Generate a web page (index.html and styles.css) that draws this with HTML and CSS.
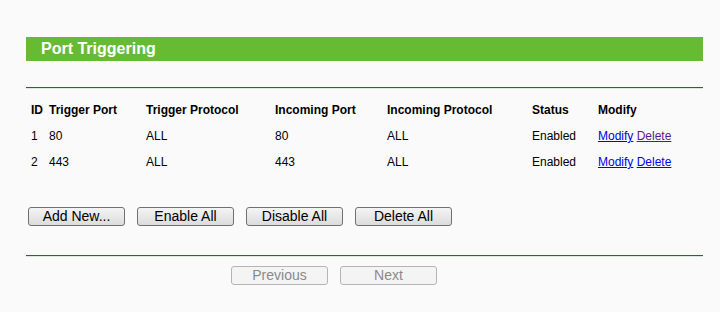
FILE: index.html
```html
<!DOCTYPE html>
<html lang="en">
<head>
  <meta charset="UTF-8">
  <title>Port Triggering</title>
  <link rel="stylesheet" href="styles.css">
</head>
<body>
  <div class="page">
    <div class="title">Port Triggering</div>
    <div class="rule"></div>

    <table class="list">
      <tr class="head">
        <td>ID</td>
        <td>Trigger Port</td>
        <td>Trigger Protocol</td>
        <td>Incoming Port</td>
        <td>Incoming Protocol</td>
        <td>Status</td>
        <td>Modify</td>
      </tr>
      <tr>
        <td>1</td>
        <td>80</td>
        <td>ALL</td>
        <td>80</td>
        <td>ALL</td>
        <td>Enabled</td>
        <td><a href="#">Modify</a> <a href="#" class="visited">Delete</a></td>
      </tr>
      <tr>
        <td>2</td>
        <td>443</td>
        <td>ALL</td>
        <td>443</td>
        <td>ALL</td>
        <td>Enabled</td>
        <td><a href="#">Modify</a> <a href="#">Delete</a></td>
      </tr>
    </table>

    <div class="actions">
      <button class="btn">Add New...</button>
      <button class="btn">Enable All</button>
      <button class="btn">Disable All</button>
      <button class="btn">Delete All</button>
    </div>

    <div class="rule"></div>

    <div class="pager">
      <button class="btn" disabled>Previous</button>
      <button class="btn" disabled>Next</button>
    </div>
  </div>
</body>
</html>
```

FILE: styles.css
```css
body {
  margin: 0;
  background: #fafafa;
  font-family: "Liberation Sans", Arial, sans-serif;
  color: #000;
}
.page {
  width: 677px;
  margin-left: 26px;
  padding-top: 37px;
}
.title {
  height: 24px;
  line-height: 23px;
  padding-left: 15px;
  background: #66bb33;
  color: #fff;
  font-size: 16px;
  font-weight: bold;
}
.rule {
  height: 1px;
  background: #1f6b3c;
  border-bottom: 1px solid #dbe8de;
}
.title + .rule {
  margin-top: 26px;
}
.list {
  width: 677px;
  margin-top: 8px;
  border-collapse: collapse;
  table-layout: fixed;
  font-size: 12px;
}
.list td {
  height: 26px;
  padding: 0 0 0 5px;
  white-space: nowrap;
}
.list td:nth-child(1) { width: 13px; }
.list td:nth-child(2) { width: 92px; }
.list td:nth-child(3) { width: 124px; }
.list td:nth-child(4) { width: 107px; }
.list td:nth-child(5) { width: 140px; }
.list td:nth-child(6) { width: 61px; }
.list td:nth-child(7) { width: 105px; }
.head td {
  font-weight: bold;
}
.list a {
  color: #0000ee;
}
.list a.visited {
  color: #551a8b;
}
.actions {
  display: flex;
  gap: 12px;
  margin: 32px 0 29px 2px;
}
.btn {
  width: 97px;
  height: 19px;
  padding: 0;
  font-family: "Liberation Sans", Arial, sans-serif;
  font-size: 14px;
  line-height: 17px;
  color: #000;
  border: 1px solid #707070;
  border-radius: 3px;
  background: linear-gradient(#f4f4f4, #dcdcdc);
}
.btn:disabled {
  color: #8a8a8a;
  border-color: #b5b5b5;
  background: #f4f4f4;
}
.pager {
  display: flex;
  gap: 12px;
  margin: 9px 0 0 205px;
}
```
